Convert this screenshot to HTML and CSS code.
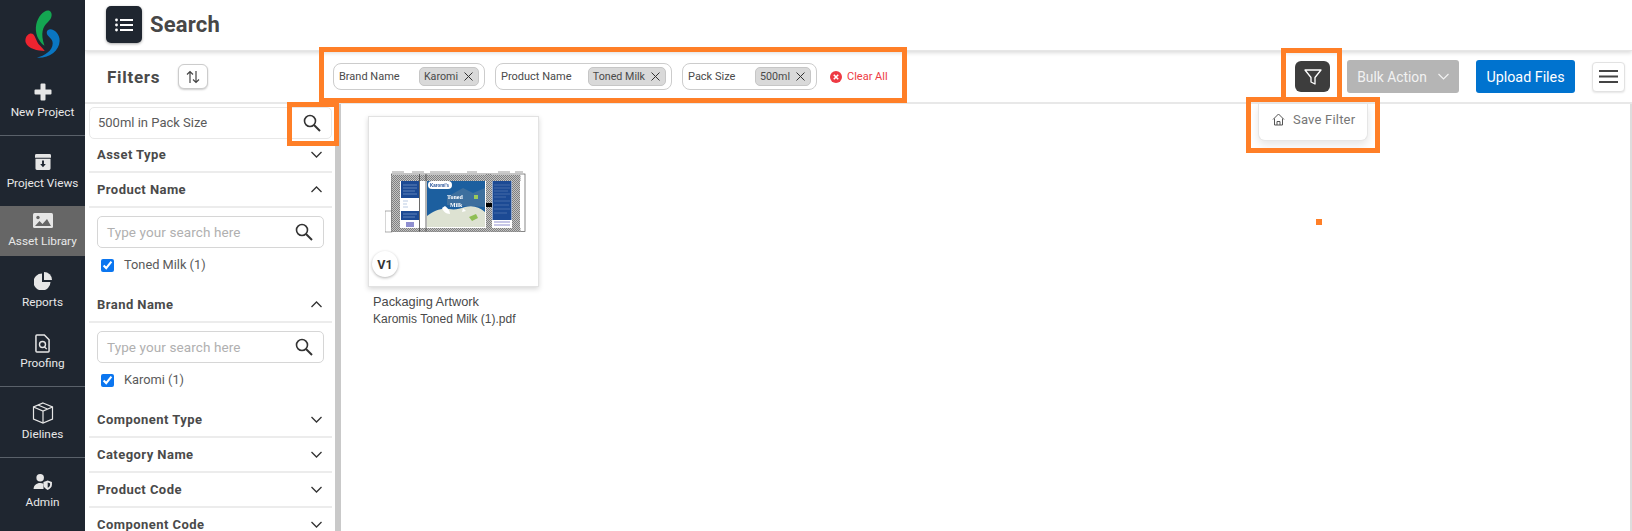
FILE: index.html
```html
<!DOCTYPE html>
<html lang="en">
<head>
<meta charset="utf-8">
<title>Search</title>
<link rel="stylesheet" href="styles.css">
</head>
<body>
<div class="app">
  <nav class="rail">
    <div class="logo">
      <svg width="38" height="51" viewBox="70 25 115 155">
        <path fill="#14a651" d="M150 33C160 38 160 55 145 68C130 82 122 100 135 140C115 125 105 100 110 75C115 50 135 28 150 33Z"/>
        <path fill="#ee2430" d="M90 103C110 100 105 125 122 140C128 146 132 150 136 156C115 155 85 150 78 130C75 118 80 107 90 103Z"/>
        <path fill="#0a76c2" d="M150 90C165 88 182 105 181 125C180 155 150 178 112 176C135 170 160 155 160 132C160 115 140 112 142 98C143 93 146 91 150 90Z"/>
      </svg>
    </div>
    <a class="rail-item first">
      <svg width="18" height="18" viewBox="0 0 18 18"><path fill="#e6e6e6" d="M6.500 1.500a1 1 0 0 1 1-1h3a1 1 0 0 1 1 1v5h5a1 1 0 0 1 1 1v3a1 1 0 0 1-1 1h-5v5a1 1 0 0 1-1 1h-3a1 1 0 0 1-1-1v-5h-5a1 1 0 0 1-1-1v-3a1 1 0 0 1 1-1h5z"/></svg>
      <span>New Project</span>
    </a>
    <a class="rail-item views">
      <svg width="18" height="16" viewBox="0 0 18 17"><path fill="#e6e6e6" d="M2 0h14a1.500 1.500 0 0 1 1.500 1.500V4H.5V1.500A1.500 1.500 0 0 1 2 0zM1 5h16v10.500a1.500 1.500 0 0 1-1.500 1.500h-13A1.500 1.500 0 0 1 1 15.500z"/><path fill="#1f2630" d="M8 7h2v3.500h2L9 14l-3-3.500h2z"/></svg>
      <span>Project Views</span>
    </a>
    <a class="rail-item active">
      <svg width="20" height="15" viewBox="0 0 20 15"><rect width="20" height="15" rx="1.500" fill="#e6e6e6"/><circle cx="5" cy="4.500" r="1.700" fill="#666"/><path fill="#666" d="M2 13l4.500-5 3 3L14 6l4 7z"/></svg>
      <span>Asset Library</span>
    </a>
    <a class="rail-item reports">
      <svg width="18" height="18" viewBox="0 0 18 18"><path fill="#e6e6e6" d="M8 1.500V10h8.500A8.500 8.500 0 1 1 8 1.500z"/><path fill="#e6e6e6" d="M10 0a8 8 0 0 1 8 8h-8z"/></svg>
      <span>Reports</span>
    </a>
    <a class="rail-item proofing">
      <svg width="15" height="19" viewBox="0 0 16 20"><path fill="none" stroke="#e6e6e6" stroke-width="1.600" d="M2 1h8l5 5v12a1 1 0 0 1-1 1H2a1 1 0 0 1-1-1V2a1 1 0 0 1 1-1z"/><circle cx="8" cy="11" r="3.200" fill="none" stroke="#e6e6e6" stroke-width="1.500"/><path stroke="#e6e6e6" stroke-width="1.500" d="M10 13.500l2.500 2.500"/></svg>
      <span>Proofing</span>
    </a>
    <a class="rail-item dielines">
      <svg width="22" height="22" viewBox="0 0 22 22" fill="none" stroke="#e6e6e6" stroke-width="1.200"><path d="M11 1l9.500 4v12L11 21 1.500 17V5z"/><path d="M1.500 5L11 9l9.500-4M11 9v12M6 3l9.500 4"/></svg>
      <span>Dielines</span>
    </a>
    <a class="rail-item admin">
      <svg width="20" height="16" viewBox="0 0 20 17"><circle cx="7" cy="4" r="4" fill="#e6e6e6"/><path fill="#e6e6e6" d="M0 16c0-4 3-6.500 7-6.500 1.500 0 2.500.3 3.500.8V16z"/><path fill="#e6e6e6" d="M15 7l4.500 1.500v3c0 2.500-2 4.500-4.500 5.500-2.500-1-4.500-3-4.500-5.500v-3z"/><path fill="#1f2630" d="M15 9l2.500.8v1.700c0 1.400-1 2.500-2.500 3.200z"/></svg>
      <span>Admin</span>
    </a>
  </nav>

  <div class="content">
    <header class="top">
      <button class="menu-dark">
        <svg width="18" height="14" viewBox="0 0 18 14" fill="#fff"><circle cx="1.500" cy="2" r="1.400"/><circle cx="1.500" cy="7" r="1.400"/><circle cx="1.500" cy="12" r="1.400"/><rect x="5" y="1" width="13" height="2"/><rect x="5" y="6" width="13" height="2"/><rect x="5" y="11" width="13" height="2"/></svg>
      </button>
      <h1>Search</h1>
    </header>

    <div class="bar">
      <div class="bar-title">
        <h2>Filters</h2>
        <button class="sort">
          <svg width="14" height="14" viewBox="0 0 14 14" fill="none" stroke="#444" stroke-width="1.200"><path d="M4 13V1.500M1 4.500l3-3 3 3M10 1v11.500M7 9.500l3 3 3-3"/></svg>
        </button>
      </div>
      <div class="chips">
        <div class="chip c1"><span class="chip-label">Brand Name</span><span class="pill">Karomi<svg class="x" width="9" height="9" viewBox="0 0 9 9"><path d="M.5.500l8 8m0-8l-8 8" stroke="#333" fill="none"/></svg></span></div>
        <div class="chip c2"><span class="chip-label">Product Name</span><span class="pill">Toned Milk<svg class="x" width="9" height="9" viewBox="0 0 9 9"><path d="M.5.500l8 8m0-8l-8 8" stroke="#333" fill="none"/></svg></span></div>
        <div class="chip c3"><span class="chip-label">Pack Size</span><span class="pill">500ml<svg class="x" width="9" height="9" viewBox="0 0 9 9"><path d="M.5.500l8 8m0-8l-8 8" stroke="#333" fill="none"/></svg></span></div>
        <a class="clear">
          <svg width="12" height="12" viewBox="0 0 12 12"><circle cx="6" cy="6" r="6" fill="#ee3a43"/><path d="M3.800 3.800l4.400 4.400m0-4.400L3.800 8.200" stroke="#fff" stroke-width="1.600"/></svg>
          Clear All
        </a>
      </div>
      <div class="actions">
        <button class="funnel">
          <svg width="18" height="18" viewBox="0 0 18 18" fill="none" stroke="#fff" stroke-width="1.300" stroke-linejoin="round"><path d="M1 2h16l-6 7.500V16l-4-2V9.500z"/></svg>
        </button>
        <button class="bulk">Bulk Action
          <svg width="11" height="7" viewBox="0 0 11 7" fill="none" stroke="#f2f2f2" stroke-width="1.200"><path d="M.5 1l5 5 5-5"/></svg>
        </button>
        <button class="upload">Upload Files</button>
        <button class="burger">
          <svg width="19" height="13" viewBox="0 0 19 13" fill="#444"><rect width="19" height="2"/><rect y="5.500" width="19" height="2"/><rect y="11" width="19" height="2"/></svg>
        </button>
      </div>
    </div>

    <div class="body">
      <aside class="panel">
        <div class="panel-inner">
          <div class="query">
            <span>500ml in Pack Size</span>
            <svg class="mag" width="18" height="18" viewBox="0 0 18 18" fill="none" stroke="#333" stroke-width="1.600"><circle cx="7" cy="7" r="5.500"/><path d="M11 11l6 6" stroke-width="2"/></svg>
          </div>
          <section class="group flat"><h3>Asset Type</h3><svg class="chev" width="11" height="7" viewBox="0 0 11 7" fill="none" stroke="#333" stroke-width="1.300"><path d="M.5 1l5 5 5-5"/></svg></section>
          <section class="group"><h3>Product Name</h3><svg class="chev" width="11" height="7" viewBox="0 0 11 7" fill="none" stroke="#333" stroke-width="1.300"><path d="M.5 6l5-5 5 5"/></svg></section>
          <div class="facet">
            <div class="search"><span>Type your search here</span><svg width="18" height="18" viewBox="0 0 18 18" fill="none" stroke="#333" stroke-width="1.600"><circle cx="7" cy="7" r="5.500"/><path d="M11 11l6 6" stroke-width="2"/></svg></div>
            <label class="check"><input type="checkbox" checked>Toned Milk (1)</label>
          </div>
          <section class="group"><h3>Brand Name</h3><svg class="chev" width="11" height="7" viewBox="0 0 11 7" fill="none" stroke="#333" stroke-width="1.300"><path d="M.5 6l5-5 5 5"/></svg></section>
          <div class="facet">
            <div class="search"><span>Type your search here</span><svg width="18" height="18" viewBox="0 0 18 18" fill="none" stroke="#333" stroke-width="1.600"><circle cx="7" cy="7" r="5.500"/><path d="M11 11l6 6" stroke-width="2"/></svg></div>
            <label class="check"><input type="checkbox" checked>Karomi (1)</label>
          </div>
          <section class="group"><h3>Component Type</h3><svg class="chev" width="11" height="7" viewBox="0 0 11 7" fill="none" stroke="#333" stroke-width="1.300"><path d="M.5 1l5 5 5-5"/></svg></section>
          <section class="group"><h3>Category Name</h3><svg class="chev" width="11" height="7" viewBox="0 0 11 7" fill="none" stroke="#333" stroke-width="1.300"><path d="M.5 1l5 5 5-5"/></svg></section>
          <section class="group"><h3>Product Code</h3><svg class="chev" width="11" height="7" viewBox="0 0 11 7" fill="none" stroke="#333" stroke-width="1.300"><path d="M.5 1l5 5 5-5"/></svg></section>
          <section class="group"><h3>Component Code</h3><svg class="chev" width="11" height="7" viewBox="0 0 11 7" fill="none" stroke="#333" stroke-width="1.300"><path d="M.5 1l5 5 5-5"/></svg></section>
        </div>
        <div class="scroll"></div>
      </aside>
      <main class="results">
        <article class="asset">
          <div class="thumb">
            <svg class="art" width="142" height="62" viewBox="0 0 142 62">
              <defs>
                <pattern id="hatch" width="2" height="2" patternUnits="userSpaceOnUse">
                  <rect width="2" height="2" fill="#c4c4c4"/>
                  <rect width="1" height="1" fill="#808080"/>
                  <rect x="1" y="1" width="1" height="1" fill="#808080"/>
                </pattern>
              </defs>
              <path d="M7 1h12M27 1h12M45 1h20M82 1h10M113 1h12M130 1h8" stroke="#999" stroke-width="1"/>
              <rect x="0" y="40" width="7" height="21" fill="none" stroke="#777" stroke-width=".6"/>
              <rect x="6.500" y="3" width="133.500" height="57.500" fill="#fff" stroke="#555" stroke-width=".7"/>
              <rect x="6.500" y="4" width="129" height="6" fill="url(#hatch)"/>
              <rect x="6.500" y="57" width="129" height="3.500" fill="url(#hatch)"/>
              <rect x="7" y="10" width="8" height="47" fill="url(#hatch)"/>
              <rect x="127" y="10" width="8" height="47" fill="url(#hatch)"/>
              <rect x="16" y="10" width="18" height="17" fill="#1c4a94"/>
              <path d="M18 14h14M18 17h14M18 20h12M18 23h14" stroke="#8fa8d0" stroke-width=".6"/>
              <path d="M18 30h5M18 33h4M18 36h5" stroke="#8fa8d0" stroke-width=".6"/>
              <rect x="16" y="40" width="18" height="9" fill="#1c4a94"/>
              <path d="M18 43h14M18 46h12" stroke="#8fa8d0" stroke-width=".6"/>
              <rect x="21" y="51" width="8" height="5" fill="#8f8fd0"/>
              <path d="M34.500 3v57.500M41 3v57.500" stroke="#444" stroke-width=".8"/>
              <rect x="42" y="10" width="58" height="46" fill="#1c5f9f"/>
              <path d="M62 26l16-9 10 5 12-5v19l-38-2z" fill="#3d6f9e"/>
              <path d="M42 45c8-6 14-8 22-7 6 1 10 0 16-2 8-2 14 0 20 5v15H42z" fill="#dde2d2"/>
              <path d="M60 35c3 2 5 5 5 8-4 0-7-3-8-6zM78 37l3 3-4 1z" fill="#fff"/>
              <path d="M84 46l7-3 2 4-6 3z" fill="#8fbf55"/>
              <rect x="43" y="10" width="24" height="8" rx="4" fill="#fff"/>
              <text x="45" y="16" class="art-brand">Karomi's</text>
              <text x="62" y="28" class="art-name">Toned</text>
              <text x="65" y="36" class="art-name">Milk</text>
              <rect x="89" y="24" width="4" height="4" fill="#9acb5a"/>
              <rect x="101" y="3" width="6" height="57.500" fill="url(#hatch)"/>
              <rect x="101" y="32" width="6" height="4" fill="#000"/>
              <rect x="107.500" y="10" width="19" height="39" fill="#1c4a94"/>
              <path d="M109 14h16M109 17h16M109 20h14M109 23h16M109 26h12M109 30h16M109 34h15M109 38h16M109 42h13" stroke="#6f8dbd" stroke-width=".5"/>
              <path d="M109 51h16M109 54h16" stroke="#8f8fd0" stroke-width="1"/>
            </svg>
            <span class="ver">V1</span>
          </div>
          <div class="asset-type">Packaging Artwork</div>
          <div class="asset-file">Karomis Toned Milk (1).pdf</div>
        </article>
      </main>
    </div>
  </div>

  <div class="popover">
    <svg width="13" height="13" viewBox="0 0 13 13" fill="none" stroke="#555" stroke-width="1"><path d="M1 6.500L6.500 1 12 6.500M2.500 5.500V12h8V5.500M5 12V8.500h3V12"/></svg>
    <span>Save Filter</span>
  </div>
  <div class="mark m1"></div>
  <div class="mark m2"></div>
  <div class="mark m3"></div>
  <div class="mark m4"></div>
  <div class="dot"></div>
</div>
</body>
</html>
```

FILE: styles.css
```css
* { box-sizing: border-box; }
html, body { margin: 0; height: 100%; overflow: hidden; }
body { font-family: Roboto, "Liberation Sans", sans-serif; color: #444; background: #fff; }
button { font-family: inherit; padding: 0; cursor: pointer; }
h1, h2, h3 { margin: 0; }

.app { position: relative; display: flex; width: 1632px; height: 531px; overflow: hidden; }

.rail { width: 85px; flex: none; background: #1f2630; color: #e8e8e8; display: flex; flex-direction: column; }
.logo { height: 83px; padding: 8px 0 0 23px; }
.rail-item { display: flex; flex-direction: column; align-items: center; font-size: 11.800px; line-height: 14px; }
.rail-item.first { height: 53px; gap: 4px; border-bottom: 1px solid #5a616a; }
.rail-item.views { height: 70px; padding-top: 18px; gap: 6px; }
.rail-item.active { height: 50px; background: #666; padding-top: 7px; gap: 6px; }
.rail-item.reports { height: 63px; padding-top: 16px; gap: 5px; }
.rail-item.proofing { height: 68px; padding-top: 15px; gap: 3px; border-bottom: 1px solid #5a616a; }
.rail-item.dielines { height: 71px; padding-top: 15px; gap: 3px; border-bottom: 1px solid #5a616a; }
.rail-item.admin { padding-top: 16px; gap: 5px; }

.content { flex: 1; min-width: 0; display: flex; flex-direction: column; }

.top { height: 51px; flex: none; display: flex; align-items: flex-start; padding: 6px 0 0 21px; gap: 8px; box-shadow: 0 2px 4px rgba(0,0,0,.14); border-bottom: 1px solid #e6e6e6; position: relative; }
.menu-dark { width: 36px; height: 37px; border: 0; border-radius: 5px; background: #1f2630; display: flex; align-items: center; justify-content: center; box-shadow: 0 1px 3px rgba(0,0,0,.35); }
h1 { font-size: 22px; font-weight: 700; line-height: 37px; color: #474747; letter-spacing: .2px; }

.bar { height: 53px; flex: none; display: flex; align-items: center; border-bottom: 2px solid #e8e8e8; }
.bar-title { width: 248px; flex: none; display: flex; align-items: center; padding-left: 22px; gap: 18px; }
h2 { font-size: 17px; font-weight: 700; letter-spacing: .7px; color: #4a4a4a; }
.sort { width: 30px; height: 25px; border: 1px solid #ccc; border-radius: 6px; background: #fff; box-shadow: 0 1px 2px rgba(0,0,0,.2); display: flex; align-items: center; justify-content: center; }

.chips { display: flex; align-items: center; gap: 10px; }
.chip { height: 27px; border: 1px solid #ccc; border-radius: 8px; display: flex; align-items: center; justify-content: space-between; padding: 0 5px; font-size: 11px; color: #4a4a4a; }
.c1 { width: 152px; }
.c2 { width: 177px; }
.c3 { width: 135px; }
.pill { height: 19px; padding: 0 5px 0 4px; display: flex; align-items: center; gap: 6px; font-size: 10.700px; background: #d9d9d9; border: 1px solid #c6c6c6; border-radius: 5px; }
.clear { margin-left: 3px; display: flex; align-items: center; gap: 5px; font-size: 11px; color: #ee3a43; }

.actions { margin-left: auto; display: flex; align-items: center; padding-right: 7px; }
.funnel { width: 35px; height: 31px; border: 0; border-radius: 6px; background: #3d3d3d; display: flex; align-items: center; justify-content: center; margin-right: 17px; }
.bulk { width: 112px; height: 33px; border: 0; border-radius: 3px; background: #b5b5b5; color: #f2f2f2; font-size: 13.800px; display: flex; align-items: center; justify-content: center; gap: 11px; margin-right: 17px; }
.upload { width: 99px; height: 33px; border: 0; border-radius: 3px; background: #0073cf; color: #fff; font-size: 14.300px; margin-right: 17px; }
.burger { width: 33px; height: 30px; border: 1px solid #e2e2e2; border-radius: 4px; background: #fff; display: flex; align-items: center; justify-content: center; box-shadow: 0 1px 2px rgba(0,0,0,.1); }

.body { flex: 1; min-height: 0; display: flex; }
.panel { width: 256px; flex: none; display: flex; }
.panel-inner { width: 250px; padding: 3px 3px 0 4px; }
.scroll { width: 6px; background: #c9c9c9; }
.query { height: 32px; border: 1px solid #e8e8e8; border-radius: 5px; display: flex; align-items: center; justify-content: space-between; padding: 0 10px 1px 8px; font-size: 13px; color: #5a5a5a; }
.group { height: 35px; flex: none; display: flex; align-items: center; justify-content: space-between; padding: 0 10px 1px 8px; border-bottom: 2px solid #ececec; }
.group.flat { height: 34px; }
h3 { font-size: 13px; font-weight: 700; letter-spacing: .45px; color: #4a4a4a; }
.facet { height: 80px; padding: 8px 8px 0; }
.search { height: 32px; border: 1px solid #d6d6d6; border-radius: 5px; display: flex; align-items: center; justify-content: space-between; padding: 0 10px 0 9px; font-size: 13.500px; color: #b0b0b0; letter-spacing: .1px; }
.check { display: flex; align-items: center; gap: 10px; margin-top: 10px; font-size: 12.800px; line-height: 14px; color: #5a5a5a; padding-left: 4px; }
.check input { width: 13px; height: 13px; margin: 0; accent-color: #0b76f0; }

.results { flex: 1; min-width: 0; padding: 12px 0 0 27px; border-right: 2px solid #ddd; }
.asset { width: 172px; }
.thumb { position: relative; width: 171px; height: 171px; border: 1px solid #e2e2e2; box-shadow: 0 2px 5px rgba(0,0,0,.16); background: #fff; }
.art { position: absolute; left: 16px; top: 54px; filter: blur(.4px); }
.art-brand { font: 700 4.500px "Liberation Sans", sans-serif; fill: #1c4a94; }
.art-name { font: 700 6px "Liberation Serif", serif; fill: #fff; }
.ver { position: absolute; left: 3px; bottom: 9px; width: 26px; height: 26px; border-radius: 50%; background: #fff; box-shadow: 0 1px 3px rgba(0,0,0,.3); display: flex; align-items: center; justify-content: center; font: 700 12.500px Roboto, sans-serif; color: #333; }
.asset-type { margin: 6px 0 0 5px; font: 12.800px/18px "Liberation Sans", sans-serif; color: #4a4a4a; white-space: nowrap; }
.asset-file { margin-left: 5px; font: 12px/17px "Liberation Sans", sans-serif; color: #4a4a4a; white-space: nowrap; }

.popover { position: absolute; left: 1258px; top: 104px; width: 110px; height: 37px; background: #fff; border: 1px solid #e6e6e6; border-top: 0; border-radius: 0 0 7px 7px; box-shadow: 0 4px 8px rgba(0,0,0,.1); display: flex; align-items: center; gap: 8px; padding: 0 0 6px 13px; font-size: 13px; color: #777; letter-spacing: .2px; }

.mark { position: absolute; border: 5px solid #ff7f27; pointer-events: none; }
.m1 { left: 319px; top: 47px; width: 588px; height: 56px; }
.m2 { left: 287px; top: 102px; width: 52px; height: 44px; }
.m3 { left: 1281px; top: 48px; width: 61px; height: 50px; border-bottom: 0; }
.m4 { left: 1246px; top: 97px; width: 134px; height: 56px; }
.dot { position: absolute; left: 1316px; top: 219px; width: 6px; height: 6px; background: #ff7f27; }
```
